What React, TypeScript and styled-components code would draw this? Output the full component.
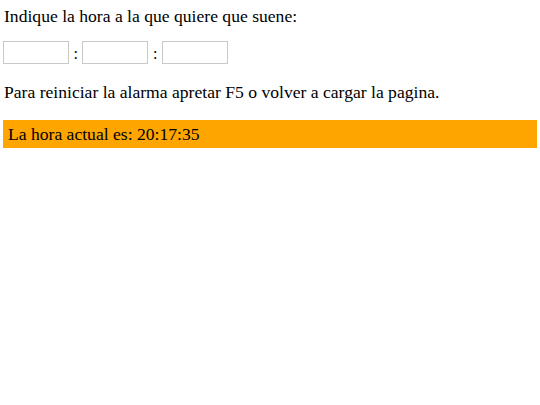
import styled, { createGlobalStyle } from "styled-components";

const GlobalStyle = createGlobalStyle`
  body {
    margin: 0;
    padding: 3px;
    font-family: "Liberation Serif", "Times New Roman", serif;
    font-size: 17.6px;
    color: #000;
    background: #fff;
  }
`;

const Page = styled.div`
  display: flex;
  flex-direction: column;
`;

const Paragraph = styled.p`
  margin: 0;
  padding: 2px 1px;
  line-height: 22px;
`;

const TimeRow = styled.div`
  display: flex;
  align-items: center;
  gap: 4.5px;
  margin: 12px 0 15px;
`;

const TimeInput = styled.input`
  width: 66px;
  height: 23px;
  box-sizing: border-box;
  border: 1px solid #c8c8c8;
  background: #fff;
  padding: 0 4px;
  font: inherit;
`;

const Separator = styled.span`
  font-size: 16px;
  padding-top: 2px;
`;

const ClockBar = styled.div`
  margin-top: 15px;
  background: #ffa500;
  height: 28px;
  display: flex;
  align-items: center;
  padding: 0 5px;
`;

export default function App() {
  return (
    <>
      <GlobalStyle />
      <Page>
        <Paragraph>Indique la hora a la que quiere que suene:</Paragraph>
        <TimeRow>
          <TimeInput type="text" />
          <Separator>:</Separator>
          <TimeInput type="text" />
          <Separator>:</Separator>
          <TimeInput type="text" />
        </TimeRow>
        <Paragraph>Para reiniciar la alarma apretar F5 o volver a cargar la pagina.</Paragraph>
        <ClockBar>La hora actual es: 20:17:35</ClockBar>
      </Page>
    </>
  );
}
